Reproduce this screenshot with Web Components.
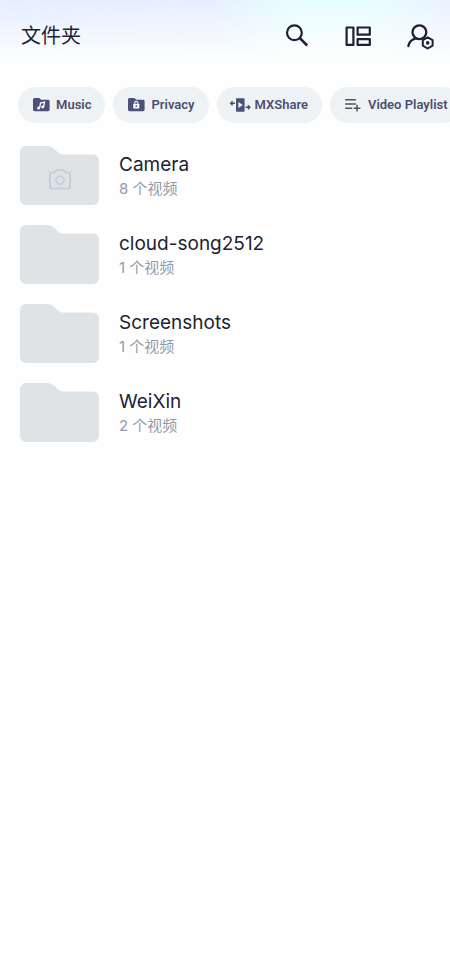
<!DOCTYPE html>
<html lang="zh-CN">
<head>
<meta charset="utf-8">
<meta name="viewport" content="width=device-width, initial-scale=1">
<title>文件夹</title>
<style>
  body {
    margin: 0;
    min-height: 100vh;
    background: #fefefe;
    color: #211f33;
    font-family: Inter, "Noto Sans CJK SC", sans-serif;
  }
</style>
</head>
<body>
<folder-screen></folder-screen>

<script>
const ICONS = {
  search: `<svg viewBox="0 0 28 28" width="28" height="28" fill="none" stroke="currentColor" stroke-width="2.2"><circle cx="12.4" cy="10.700" r="7.4"/><path d="M17.600 15.900 25.200 23.500" stroke-width="2.6"/></svg>`,
  layout: `<svg viewBox="0 0 28 28" width="28" height="28" fill="none" stroke="currentColor" stroke-width="2.2" stroke-linejoin="round"><path d="M2.600 5.500h6.800v17.400H2.600zM13.600 5.500h12.200v7.200H13.600zM13.600 17.100h12.200v5.800H13.600z"/></svg>`,
  profile: `<svg viewBox="0 0 28 28" width="28" height="28" fill="none" stroke="currentColor" stroke-width="2.3" stroke-linecap="round" stroke-linejoin="round"><circle cx="13.4" cy="10.200" r="6.900"/><path d="M2.400 24c.8-4.300 3.400-6.600 7.500-7.600"/><path d="M21.700 15.300 26.600 18.100v5.600l-4.900 2.800-4.900-2.800v-5.600z" fill="#fcfeff" stroke-width="2"/><circle cx="21.700" cy="20.900" r="1.800" fill="currentColor" stroke="none"/></svg>`,
  music: `<svg viewBox="0 0 22 22" width="22" height="22"><path fill="#4b5178" d="M4.700 4h4.600l2 1.700h6.600c1 0 1.700.7 1.700 1.600v8.300c0 .9-.7 1.600-1.700 1.600H4.700c-1 0-1.700-.7-1.700-1.600V5.600C3 4.700 3.700 4 4.700 4z"/><path d="M9.700 13.700 10.500 9l4-.9-.8 4.700" fill="none" stroke="#fff" stroke-width="1.300"/><circle cx="8.600" cy="13.900" r="1.500" fill="#fff"/><circle cx="12.700" cy="13" r="1.400" fill="#fff"/></svg>`,
  privacy: `<svg viewBox="0 0 22 22" width="22" height="22"><path fill="#4b5178" d="M4.700 4h4.600l2 1.700h6.600c1 0 1.700.7 1.700 1.600v8.300c0 .9-.7 1.600-1.700 1.600H4.700c-1 0-1.700-.7-1.700-1.600V5.600C3 4.700 3.700 4 4.700 4z"/><rect x="8.300" y="9.700" width="6" height="4.900" rx=".6" fill="#fff"/><path d="M9.700 9.800V8.900a1.600 1.600 0 0 1 3.200 0v.9" fill="none" stroke="#fff" stroke-width="1.100"/><circle cx="11.300" cy="12.100" r=".9" fill="#4b5178"/></svg>`,
  share: `<svg viewBox="0 0 22 22" width="22" height="22"><rect x="7" y="4.200" width="8.600" height="13.600" rx=".8" fill="#4b5178"/><path d="M9.400 8v6l4.400-3z" fill="#f1f3f5"/><path d="M1.800 9.300H6M3.600 7.300l-2 2 2 2M16.600 13.200h4M18.900 11.200l2 2-2 2" fill="none" stroke="#50525c" stroke-width="1.400"/></svg>`,
  playlist: `<svg viewBox="0 0 22 22" width="22" height="22" fill="none" stroke="#50525c" stroke-width="1.500"><path d="M3.200 5.700h10.600M3.200 10h10.600M3.200 14.300h7M15 10.800v6.800M11.600 14.200h6.800"/></svg>`,
  camera: `<svg viewBox="0 0 24 24" width="24" height="24" fill="none" stroke="#c8cfd5" stroke-width="2" stroke-linejoin="round"><path d="M2 4.400h5l1.700-2.400h6.600L17 4.400h5v16H2z"/><circle cx="12" cy="12.300" r="4"/></svg>`
};

class IconButton extends HTMLElement {
  connectedCallback() {
    this.attachShadow({ mode: "open" }).innerHTML = `
      <style>
        :host { display: block; }
        button { display: block; padding: 0; border: 0; background: none; color: inherit; cursor: pointer; }
        svg { display: block; }
      </style>
      <button type="button" aria-label="${this.getAttribute("label")}">${ICONS[this.getAttribute("icon")]}</button>`;
  }
}

class TopBar extends HTMLElement {
  connectedCallback() {
    this.attachShadow({ mode: "open" }).innerHTML = `
      <style>
        :host {
          display: flex; align-items: center; justify-content: space-between;
          height: 71px; padding: 0 16px 0 21px;
          background: linear-gradient(to bottom, transparent, #fefefe 90%), linear-gradient(to right, #e4eeff, #e5f0ff 48%, #e8fdff 66%, #e8fdff 82%, #e8f3ff);
        }
        h1 { margin: 0; font-size: 20px; line-height: 28px; font-weight: 400; }
        nav { display: flex; gap: 34px; }
      </style>
      <h1><slot></slot></h1>
      <nav><slot name="actions"></slot></nav>`;
  }
}

class ActionChip extends HTMLElement {
  connectedCallback() {
    this.attachShadow({ mode: "open" }).innerHTML = `
      <style>
        :host { display: block; flex: none; }
        button {
          display: flex; align-items: center; gap: 4px;
          height: 36px; padding: 0 14px 0 12px; border: 0; border-radius: 18px;
          background: #eff2f4; color: #4b5072; cursor: pointer;
          font: 600 13px/16px Roboto, "Noto Sans CJK SC", sans-serif; white-space: nowrap;
        }
        svg { display: block; }
      </style>
      <button type="button">${ICONS[this.getAttribute("icon")]}<span><slot></slot></span></button>`;
  }
}

class ChipBar extends HTMLElement {
  connectedCallback() {
    this.attachShadow({ mode: "open" }).innerHTML = `
      <style>
        :host { display: flex; gap: 8px; padding: 16px 18px 0; overflow-x: auto; scrollbar-width: none; }
      </style>
      <slot></slot>`;
  }
}

class FolderItem extends HTMLElement {
  connectedCallback() {
    const icon = this.getAttribute("icon");
    this.attachShadow({ mode: "open" }).innerHTML = `
      <style>
        :host { display: block; }
        a { display: flex; align-items: center; gap: 20px; color: inherit; text-decoration: none; }
        .folder { display: grid; place-items: center; flex: none; }
        .folder > * { grid-area: 1 / 1; display: block; }
        .folder > :nth-child(2) { margin-top: 8px; }
        .text { min-width: 0; }
        .name { font-size: 19px; line-height: 26px; }
        .count { font: 15px/22px Inter, "Noto Sans CJK SC", sans-serif; color: #929bab; }
      </style>
      <a href="#">
        <span class="folder">
          <svg viewBox="0 0 79 59" width="79" height="59"><path fill="#dfe3e6" d="M6 0h20c5 0 7.500 2 10 4.500S40 8.500 43 8.500h30a6 6 0 0 1 6 6V53a6 6 0 0 1-6 6H6a6 6 0 0 1-6-6V6a6 6 0 0 1 6-6z"/></svg>
          ${icon ? ICONS[icon] : ""}
        </span>
        <div class="text">
          <div class="name"><slot></slot></div>
          <div class="count"><slot name="count"></slot></div>
        </div>
      </a>`;
  }
}

class FolderList extends HTMLElement {
  connectedCallback() {
    this.attachShadow({ mode: "open" }).innerHTML = `
      <style>:host { display: grid; gap: 20px; padding: 23px 20px; }</style>
      <slot></slot>`;
  }
}

class FolderScreen extends HTMLElement {
  connectedCallback() {
    this.attachShadow({ mode: "open" }).innerHTML = `
      <style>:host { display: block; }</style>
      <top-bar>文件夹
        <icon-button slot="actions" icon="search" label="搜索"></icon-button>
        <icon-button slot="actions" icon="layout" label="布局"></icon-button>
        <icon-button slot="actions" icon="profile" label="账户"></icon-button>
      </top-bar>
      <chip-bar>
        <action-chip icon="music">Music</action-chip>
        <action-chip icon="privacy">Privacy</action-chip>
        <action-chip icon="share">MXShare</action-chip>
        <action-chip icon="playlist">Video Playlist</action-chip>
      </chip-bar>
      <folder-list>
        <folder-item icon="camera">Camera<span slot="count">8 个视频</span></folder-item>
        <folder-item>cloud-song2512<span slot="count">1 个视频</span></folder-item>
        <folder-item>Screenshots<span slot="count">1 个视频</span></folder-item>
        <folder-item>WeiXin<span slot="count">2 个视频</span></folder-item>
      </folder-list>`;
  }
}

customElements.define("icon-button", IconButton);
customElements.define("top-bar", TopBar);
customElements.define("action-chip", ActionChip);
customElements.define("chip-bar", ChipBar);
customElements.define("folder-item", FolderItem);
customElements.define("folder-list", FolderList);
customElements.define("folder-screen", FolderScreen);
</script>
</body>
</html>
